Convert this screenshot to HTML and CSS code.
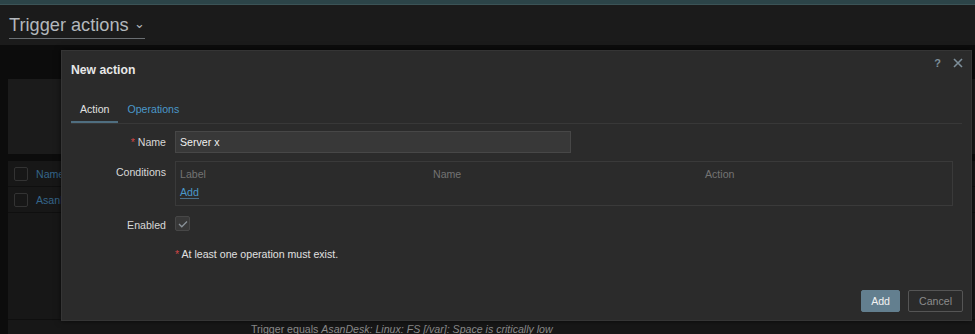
FILE: index.html
```html
<!DOCTYPE html>
<html lang="en">
<head>
  <meta charset="UTF-8" />
  <title>Trigger actions</title>
  <link rel="stylesheet" href="styles.css">
</head>
<body>

  <div class="topbar"></div>

  <header class="page-header">
    <h1>Trigger actions <span class="caret">&#8964;</span></h1>
  </header>

  <div class="page-body">
    <div class="filter"></div>
    <div class="list">
      <div class="list-row">
        <span class="box"></span>
        <a class="link">Name</a>
      </div>
      <div class="list-row">
        <span class="box"></span>
        <a class="link">AsanDesk</a>
      </div>
      <div class="list-row tall"></div>
      <div class="list-row note">
        <span>Trigger equals <i>AsanDesk: Linux: FS [/var]: Space is critically low</i></span>
      </div>
    </div>
  </div>

  <div class="dialog">
    <div class="dialog-head">
      <span class="dialog-title">New action</span>
      <span class="head-icons">
        <span class="help">?</span>
        <svg class="close" width="10" height="10" viewBox="0 0 10 10">
          <path d="M1 1 L9 9 M9 1 L1 9" stroke="#7d8e99" stroke-width="1.6"/>
        </svg>
      </span>
    </div>

    <div class="tabs">
      <span class="tab active">Action</span>
      <span class="tab">Operations</span>
    </div>

    <div class="form">
      <label class="form-label"><span class="req">*</span> Name</label>
      <div class="form-field">
        <div class="input">Server x</div>
      </div>

      <label class="form-label">Conditions</label>
      <div class="form-field">
        <div class="conditions">
          <div class="cond-head">
            <span class="c-label">Label</span>
            <span class="c-name">Name</span>
            <span class="c-action">Action</span>
          </div>
          <a class="add-link">Add</a>
        </div>
      </div>

      <label class="form-label">Enabled</label>
      <div class="form-field">
        <span class="checkbox">
          <svg width="10" height="8" viewBox="0 0 10 8">
            <path d="M1 4 L3.8 6.8 L9 1.5" fill="none" stroke="#8a9299" stroke-width="1.3"/>
          </svg>
        </span>
      </div>

      <span></span>
      <div class="form-field message"><span class="req">*</span> At least one operation must exist.</div>
    </div>

    <div class="dialog-foot">
      <button class="btn primary">Add</button>
      <button class="btn">Cancel</button>
    </div>
  </div>

</body>
</html>
```

FILE: styles.css
```css
* {
  box-sizing: border-box;
}

body {
  margin: 0;
  width: 975px;
  height: 334px;
  overflow: hidden;
  background: #0c0c0c;
  font-family: "Liberation Sans", Arial, sans-serif;
  font-size: 10.6px;
  color: #d2d2d2;
  position: relative;
}

.topbar {
  height: 5px;
  background: #2c4448;
  border-bottom: 1px solid #3b5356;
}

.page-header {
  height: 40px;
  background: #1b1b1b;
  padding: 9px 0 0 9px;
}

.page-header h1 {
  display: inline-block;
  margin: 0;
  font-size: 18.2px;
  font-weight: normal;
  color: #b3b8bd;
  line-height: 22px;
  border-bottom: 1px solid #6a6e72;
}

.caret {
  font-size: 13px;
  position: relative;
  top: -3px;
}

.page-body {
  padding: 34px 0 0 8px;
}

.filter {
  height: 75px;
  width: 100%;
  background: #1b1b1b;
}

.list {
  margin-top: 7px;
  background: #171717;
}

.list-row {
  display: flex;
  align-items: center;
  height: 26px;
  padding-left: 6px;
  border-bottom: 1px solid #0f0f0f;
}

.list-row.tall {
  height: 107px;
}

.list-row.note {
  padding-left: 243px;
  color: #8a8a8a;
  height: 16px;
  align-items: flex-end;
}

.box {
  width: 14px;
  height: 14px;
  border: 1px solid #333;
  border-radius: 2px;
  margin-right: 8px;
}

.link {
  color: #35658a;
}

/* dialog */

.dialog {
  position: absolute;
  left: 61px;
  top: 50px;
  width: 911px;
  height: 271px;
  display: flex;
  flex-direction: column;
  background: #2b2b2b;
  border: 1px solid #353535;
  box-shadow: 0 0 6px rgba(0, 0, 0, 0.6);
  padding: 0 9px 8px;
}

.dialog-head {
  display: flex;
  justify-content: space-between;
  align-items: center;
  height: 36px;
  padding-top: 2px;
}

.dialog-title {
  font-size: 12.2px;
  font-weight: bold;
  color: #e8e8e8;
}

.head-icons {
  display: flex;
  align-items: center;
  gap: 12px;
  margin-top: -14px;
  margin-right: -1px;
}

.help {
  color: #7d8e99;
  font-size: 11px;
  font-weight: bold;
}

.tabs {
  display: flex;
  margin-top: 12px;
  border-bottom: 1px solid #383838;
}

.tab {
  padding: 4px 9px 6px;
  color: #4a97c9;
}

.tab.active {
  color: #e0e0e0;
  border-bottom: 2px solid #4f6e80;
}

.form {
  display: grid;
  grid-template-columns: 95px 1fr;
  column-gap: 9px;
  margin-top: 7px;
  margin-right: 9px;
}

.form-label {
  text-align: right;
  padding-top: 5px;
  color: #d8d8d8;
}

.form-field {
  margin-bottom: 8px;
}

.req {
  color: #d14545;
}

.input {
  width: 396px;
  height: 22px;
  background: #383838;
  border: 1px solid #474747;
  padding: 4px 4px;
  color: #f0f0f0;
}

.conditions {
  border: 1px solid #3a3a3a;
  height: 45px;
  padding: 6px 4px;
}

.cond-head {
  display: flex;
  color: #737373;
}

.c-label {
  width: 253px;
}

.c-name {
  width: 272px;
}

.add-link {
  display: inline-block;
  margin-top: 6px;
  color: #4a97c9;
  border-bottom: 1px solid #4a6f88;
  line-height: 12px;
}

.checkbox {
  display: flex;
  align-items: center;
  justify-content: center;
  width: 15px;
  height: 15px;
  margin-top: 2px;
  background: #383838;
  border: 1px solid #474747;
  border-radius: 2px;
}

.message {
  margin-top: 9px;
  color: #e0e0e0;
}

.dialog-foot {
  display: flex;
  justify-content: flex-end;
  gap: 8px;
  margin-top: auto;
  margin-right: -1px;
}

.btn {
  height: 22px;
  padding: 0 10px;
  font-family: inherit;
  font-size: 10.6px;
  background: transparent;
  border: 1px solid #555;
  border-radius: 2px;
  color: #8c8c8c;
}

.btn.primary {
  padding: 0 9px;
  background: #637f8f;
  border-color: #637f8f;
  color: #f2f2f2;
}
```
